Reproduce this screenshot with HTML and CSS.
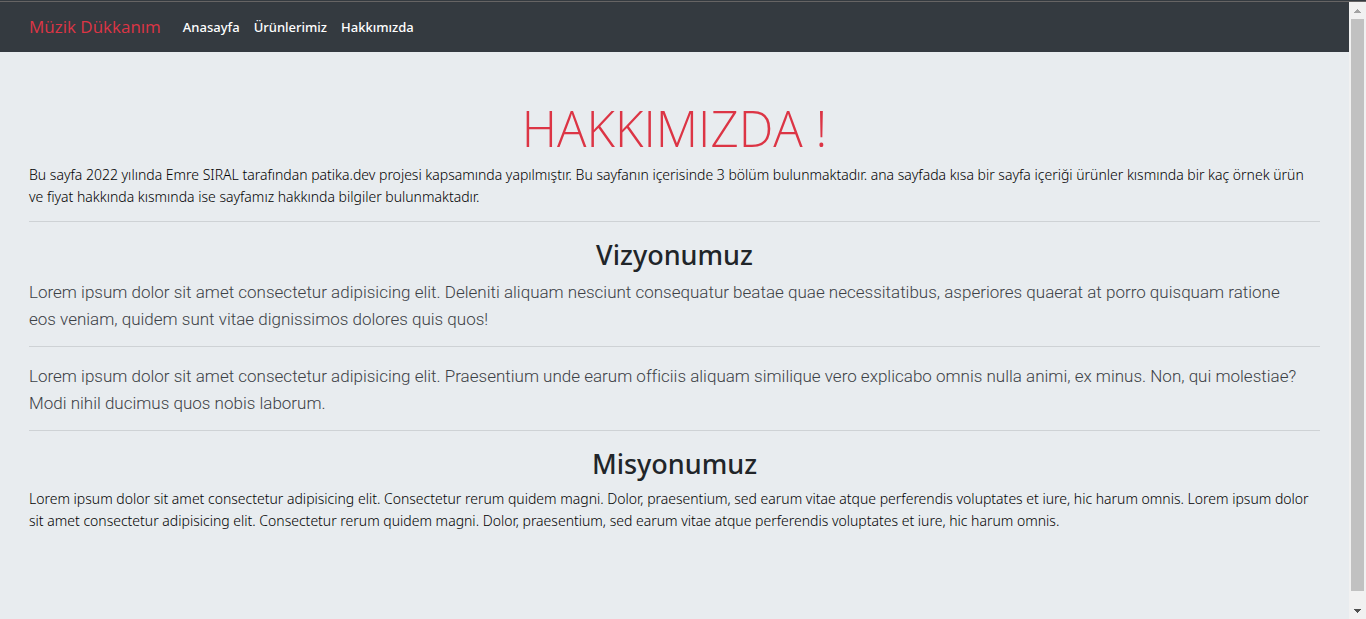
FILE: index.html
```html
<!DOCTYPE html>
<html lang="tr">
<head>
<meta charset="utf-8">
<meta name="viewport" content="width=device-width, initial-scale=1">
<title>Müzik Dükkanım</title>
<link rel="stylesheet" href="styles.css">
</head>
<body>
<div class="window">
  <div class="page">
    <nav class="navbar">
      <a class="brand" href="#">Müzik Dükkanım</a>
      <a class="nav-link" href="#">Anasayfa</a>
      <a class="nav-link" href="#">Ürünlerimiz</a>
      <a class="nav-link" href="#">Hakkımızda</a>
    </nav>
    <main class="content">
      <h1 class="title">HAKKIMIZDA !</h1>
      <p class="text">Bu sayfa 2022 yılında Emre SIRAL tarafından patika.dev projesi kapsamında yapılmıştır. Bu sayfanın içerisinde 3 bölüm bulunmaktadır. ana sayfada kısa bir sayfa içeriği ürünler kısmında bir kaç örnek ürün ve fiyat hakkında kısmında ise sayfamız hakkında bilgiler bulunmaktadır.</p>
      <hr class="rule">
      <h2 class="heading">Vizyonumuz</h2>
      <p class="lead">Lorem ipsum dolor sit amet consectetur adipisicing elit. Deleniti aliquam nesciunt consequatur beatae quae necessitatibus, asperiores quaerat at porro quisquam ratione<br>eos veniam, quidem sunt vitae dignissimos dolores quis quos!</p>
      <hr class="rule">
      <p class="lead">Lorem ipsum dolor sit amet consectetur adipisicing elit. Praesentium unde earum officiis aliquam similique vero explicabo omnis nulla animi, ex minus. Non, qui molestiae? Modi nihil ducimus quos nobis laborum.</p>
      <hr class="rule">
      <h2 class="heading">Misyonumuz</h2>
      <p class="text">Lorem ipsum dolor sit amet consectetur adipisicing elit. Consectetur rerum quidem magni. Dolor, praesentium, sed earum vitae atque perferendis voluptates et iure, hic harum omnis. Lorem ipsum dolor sit amet consectetur adipisicing elit. Consectetur rerum quidem magni. Dolor, praesentium, sed earum vitae atque perferendis voluptates et iure, hic harum omnis.</p>
    </main>
  </div>
  <div class="scrollbar">
    <button class="scroll-button" type="button" aria-label="Yukarı kaydır"><svg width="7" height="4" viewBox="0 0 7 4" shape-rendering="crispEdges"><path fill="#a3a3a3" d="M3 0h1v1h1v1h1v1h1v1H0V3h1V2h1V1h1z"/></svg></button>
    <div class="scroll-thumb"></div>
    <div class="scroll-rest"></div>
    <button class="scroll-button" type="button" aria-label="Aşağı kaydır"><svg width="7" height="4" viewBox="0 0 7 4" shape-rendering="crispEdges"><path fill="#505050" d="M0 0h7v1H6v1H5v1H4v1H3V3H2V2H1V1H0z"/></svg></button>
  </div>
</div>
</body>
</html>
```
FILE: styles.css
```css
* {
  box-sizing: border-box;
}

body {
  margin: 0;
  background: #e8ecef;
  color: #212529;
  font-family: "Noto Sans", "Open Sans", sans-serif;
  font-size: 14px;
  line-height: 22px;
}

.window {
  display: flex;
  min-height: 100vh;
  border-top: 1px solid #343a40;
  box-shadow: inset 0 1px #666464;
  padding-top: 1px;
}

.page {
  flex: 1;
  min-width: 0;
}

.navbar {
  display: flex;
  align-items: center;
  gap: 14px;
  min-height: 50px;
  padding: 0 29px;
  background: #343a40;
}

.brand {
  margin-right: 8px;
  color: #dc3545;
  font-family: "Open Sans", sans-serif;
  font-size: 17px;
  text-decoration: none;
}

.nav-link {
  color: #fff;
  font-size: 13px;
  font-weight: 500;
  text-decoration: none;
}

.content {
  padding: 48px 29px;
}

.title {
  margin: 0 0 8px;
  color: #dc3545;
  font-family: "Open Sans", sans-serif;
  font-size: 49px;
  font-weight: 300;
  line-height: 56px;
  text-align: center;
}

.text,
.lead {
  margin: 0;
}

.text {
  color: #000;
  font-weight: 300;
}

.lead {
  color: #3c4146;
  font-family: Roboto, sans-serif;
  font-size: 17px;
  font-weight: 300;
  line-height: 27px;
}

.rule {
  height: 1px;
  margin: 13px 0 16px;
  border: 0;
  background: #ced2d5;
}

.heading {
  margin: 0 0 7px;
  font-size: 27px;
  font-weight: 500;
  line-height: 34px;
  text-align: center;
}

.scrollbar {
  display: flex;
  flex-direction: column;
  width: 17px;
  padding: 0 2px;
  background: #f1f1f1;
}

.scroll-button {
  display: flex;
  align-items: center;
  justify-content: center;
  height: 17px;
  padding: 0;
  border: 0;
  background: none;
}

.scroll-thumb {
  flex: 52;
  background: #c1c1c1;
}

.scroll-rest {
  flex: 1;
}
```
